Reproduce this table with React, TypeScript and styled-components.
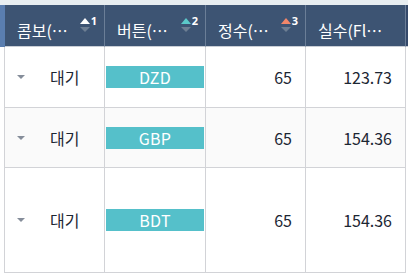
import React from 'react';
import styled, { createGlobalStyle } from 'styled-components';

const GlobalStyle = createGlobalStyle`
  html, body {
    margin: 0;
    padding: 0;
    background: #ffffff;
    font-family: "Noto Sans CJK KR", "Noto Sans", sans-serif;
  }
`;

type Column = { title: string; textWidth: number; sort?: { order: number; color: string } };

const columns: Column[] = [
  { title: '콤보(Combo)', textWidth: 55, sort: { order: 1, color: '#ffffff' } },
  { title: '버튼(Button)', textWidth: 55, sort: { order: 2, color: '#5cc9c9' } },
  { title: '정수(Integer)', textWidth: 54, sort: { order: 3, color: '#f2876a' } },
  { title: '실수(Float)', textWidth: 68 },
];

const rows = [
  { status: '대기', code: 'DZD', int: 65, real: '123.73', alt: false },
  { status: '대기', code: 'GBP', int: 65, real: '154.36', alt: true },
  { status: '대기', code: 'BDT', int: 65, real: '154.36', alt: false },
];

export default function App() {
  return (
    <>
      <GlobalStyle />
      <Page>
        <TopBand />
        <Grid>
          <HeaderEdge />
          {columns.map((c) => (
            <HeaderCell key={c.title}>
              <HeaderText $w={c.textWidth}>{c.title}</HeaderText>
              {c.sort && (
                <SortMark>
                  <Arrows>
                    <Up $color={c.sort.color} />
                    <Down />
                  </Arrows>
                  <SortNo>{c.sort.order}</SortNo>
                </SortMark>
              )}
            </HeaderCell>
          ))}
          <HeaderRest />

          {rows.map((r, i) => (
            <React.Fragment key={i}>
              <BodyEdge />
              <ComboCell $alt={r.alt}>
                <Caret />
                <ComboText>{r.status}</ComboText>
              </ComboCell>
              <ButtonCell $alt={r.alt}>
                <CellButton>{r.code}</CellButton>
              </ButtonCell>
              <NumCell $alt={r.alt}>{r.int}</NumCell>
              <NumCell $alt={r.alt}>{r.real}</NumCell>
              <BodyRest />
            </React.Fragment>
          ))}
        </Grid>
      </Page>
    </>
  );
}

const Page = styled.div`
  width: 408px;
  height: 274px;
  overflow: hidden;
`;

const TopBand = styled.div`
  height: 5px;
  background: #e8eef1;
`;

const Grid = styled.div`
  display: grid;
  grid-template-columns: 5px 100px 101px 100px 100px 1fr;
  grid-template-rows: 42px 61px 60px 105px;
`;

const HeaderEdge = styled.div`
  background: #5a7eb0;
  border-right: 1px solid #5a7eb0;
`;

const HeaderCell = styled.div`
  position: relative;
  display: flex;
  align-items: center;
  background: #3d5473;
  border-right: 1px solid #6b7e97;
  border-bottom: 1px solid #c9ced6;
  padding: 8px 0 0 12px;
  color: #ffffff;
  min-width: 0;
`;

const HeaderRest = styled.div`
  background: #34496a;
  border-bottom: 1px solid #c9ced6;
`;

const HeaderText = styled.span<{ $w: number }>`
  width: ${(p) => p.$w}px;
  font-size: 16px;
  white-space: nowrap;
  overflow: hidden;
  text-overflow: ellipsis;
`;

const SortMark = styled.div`
  position: absolute;
  top: 10px;
  right: 7px;
  display: flex;
  align-items: flex-start;
`;

const Arrows = styled.div`
  display: flex;
  flex-direction: column;
  gap: 3px;
  padding-top: 3px;
`;

const Up = styled.span<{ $color: string }>`
  width: 0;
  height: 0;
  border-left: 5px solid transparent;
  border-right: 5px solid transparent;
  border-bottom: 6px solid ${(p) => p.$color};
`;

const Down = styled.span`
  width: 0;
  height: 0;
  border-left: 5px solid transparent;
  border-right: 5px solid transparent;
  border-top: 5px solid #6d7e93;
`;

const SortNo = styled.span`
  font-family: "Noto Sans", sans-serif;
  font-size: 11px;
  font-weight: 700;
  line-height: 11px;
  margin-left: 1px;
`;

const BodyEdge = styled.div`
  border-right: 1px solid #d2d3d7;
`;

const BodyCell = styled.div<{ $alt: boolean }>`
  background: ${(p) => (p.$alt ? '#fafafa' : '#ffffff')};
  border-right: 1px solid #d2d3d7;
  border-bottom: 1px solid #d2d3d7;
  display: flex;
  align-items: center;
  font-size: 16px;
  color: #1c2633;
  min-width: 0;
`;

const ComboCell = styled(BodyCell)`
  padding-left: 12px;
`;

const Caret = styled.span`
  width: 0;
  height: 0;
  border-left: 4px solid transparent;
  border-right: 4px solid transparent;
  border-top: 4px solid #858d9a;
`;

const ComboText = styled.span`
  margin-left: 25px;
`;

const ButtonCell = styled(BodyCell)`
  padding: 0 1px;
`;

const CellButton = styled.div`
  flex: 1;
  height: 22px;
  background: #55c0ca;
  color: #ffffff;
  display: flex;
  align-items: center;
  justify-content: center;
  font-size: 16px;
  letter-spacing: 0.3px;
`;

const NumCell = styled(BodyCell)`
  justify-content: flex-end;
  padding-right: 13px;
`;

const BodyRest = styled.div``;
